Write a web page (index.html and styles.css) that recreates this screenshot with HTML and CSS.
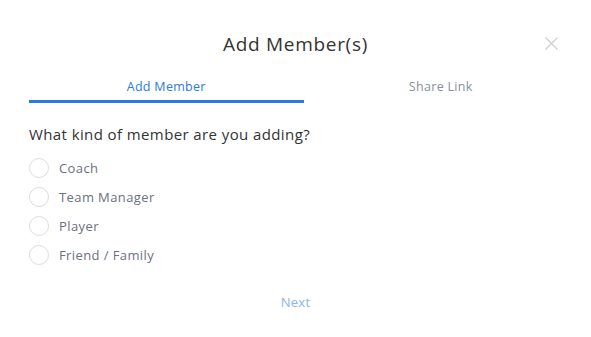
FILE: index.html
```html
<!DOCTYPE html>
<html>
<head>
<meta charset="utf-8">
<link rel="stylesheet" href="styles.css">
</head>
<body>
<div class="modal">
  <div class="header">
    <h1 class="title">Add Member(s)</h1>
    <button class="close" aria-label="Close">
      <svg width="13" height="13" viewBox="0 0 13 13"><path d="M0.5 0.5 L12.5 12.5 M12.5 0.5 L0.5 12.5" stroke="#cfcfcf" stroke-width="1.3" fill="none"/></svg>
    </button>
  </div>
  <div class="tabs">
    <div class="tab active">Add Member</div>
    <div class="tab">Share Link</div>
  </div>
  <div class="question">What kind of member are you adding?</div>
  <div class="options">
    <label class="option"><span class="radio"></span><span class="label">Coach</span></label>
    <label class="option"><span class="radio"></span><span class="label">Team Manager</span></label>
    <label class="option"><span class="radio"></span><span class="label">Player</span></label>
    <label class="option"><span class="radio"></span><span class="label">Friend / Family</span></label>
  </div>
  <div class="footer"><button class="next">Next</button></div>
</div>
</body>
</html>
```
FILE: styles.css
```css
html, body { margin: 0; padding: 0; background: #fff; }
body { font-family: "Open Sans", "Noto Sans", sans-serif; }
.modal { width: 591px; height: 337px; box-sizing: border-box; padding: 0 13px 0 29px; }
.header { position: relative; height: 88px; display: flex; justify-content: center; }
.title { margin: 0; padding-top: 31px; margin-left: -16px; font-size: 19px; letter-spacing: 0.7px; font-weight: 400; color: #333; line-height: 26px; height: 26px; }
.close { position: absolute; right: 20px; top: 37px; border: 0; background: none; padding: 0; width: 13px; height: 13px; }
.close svg { display: block; }
.tabs { display: flex; width: 549px; margin-top: -10px; }
.tab { flex: 1; text-align: center; font-size: 12.5px; letter-spacing: 0.3px; color: #8a8f99; line-height: 18px; padding-bottom: 4px; border-bottom: 3px solid transparent; }
.tab.active { color: #2a7ae2; border-bottom-color: #2a7ae2; }
.question { margin-top: 21px; font-size: 15px; letter-spacing: 0.4px; color: #333; line-height: 20px; }
.options { margin-top: 14px; display: flex; flex-direction: column; gap: 9px; }
.option { display: flex; align-items: center; gap: 10px; height: 20px; }
.radio { width: 18px; height: 18px; border: 1px solid #ddd; border-radius: 50%; }
.label { font-size: 13px; letter-spacing: 0.4px; color: #6b7180; }
.footer { display: flex; justify-content: center; margin-top: 28px; padding-right: 16px; }
.next { border: 0; background: none; font-family: inherit; font-size: 13px; letter-spacing: 0.3px; color: #8ab3ec; padding: 0; }
```
